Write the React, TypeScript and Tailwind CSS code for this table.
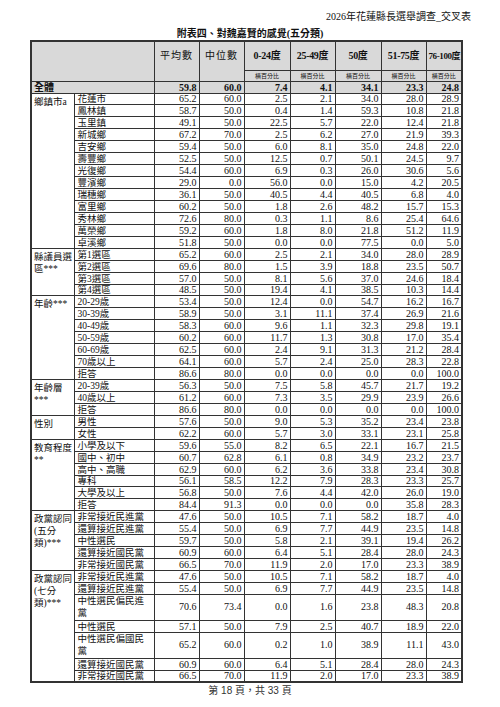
import React from "react";

type Row = { label: string; v: string[]; tall?: boolean };
type Group = { name: React.ReactNode; rows: Row[] };

const r = (s: string, tall = false): Row => {
  const p = s.split(" ");
  return { label: p[0], v: p.slice(1), tall };
};

const GROUPS: Group[] = [
  {
    name: "鄉鎮市a",
    rows: [
      r("花蓮市 65.2 60.0 2.5 2.1 34.0 28.0 28.9"),
      r("鳳林鎮 58.7 50.0 0.4 1.4 59.3 10.8 21.8"),
      r("玉里鎮 49.1 50.0 22.5 5.7 22.0 12.4 21.8"),
      r("新城鄉 67.2 70.0 2.5 6.2 27.0 21.9 39.3"),
      r("吉安鄉 59.4 50.0 6.0 8.1 35.0 24.8 22.0"),
      r("壽豐鄉 52.5 50.0 12.5 0.7 50.1 24.5 9.7"),
      r("光復鄉 54.4 60.0 6.9 0.3 26.0 30.6 5.6"),
      r("豐濱鄉 29.0 0.0 56.0 0.0 15.0 4.2 20.5"),
      r("瑞穗鄉 36.1 50.0 40.5 4.4 40.5 6.8 4.0"),
      r("富里鄉 60.2 50.0 1.8 2.6 48.2 15.7 15.3"),
      r("秀林鄉 72.6 80.0 0.3 1.1 8.6 25.4 64.6"),
      r("萬榮鄉 59.2 60.0 1.8 8.0 21.8 51.2 11.9"),
      r("卓溪鄉 51.8 50.0 0.0 0.0 77.5 0.0 5.0"),
    ],
  },
  {
    name: (
      <>
        縣議員選
        <br />
        區***
      </>
    ),
    rows: [
      r("第1選區 65.2 60.0 2.5 2.1 34.0 28.0 28.9"),
      r("第2選區 69.6 80.0 1.5 3.9 18.8 23.5 50.7"),
      r("第3選區 57.0 50.0 8.1 5.6 37.0 24.6 18.4"),
      r("第4選區 48.5 50.0 19.4 4.1 38.5 10.3 14.4"),
    ],
  },
  {
    name: "年齡***",
    rows: [
      r("20-29歲 53.4 50.0 12.4 0.0 54.7 16.2 16.7"),
      r("30-39歲 58.9 50.0 3.1 11.1 37.4 26.9 21.6"),
      r("40-49歲 58.3 60.0 9.6 1.1 32.3 29.8 19.1"),
      r("50-59歲 60.2 60.0 11.7 1.3 30.8 17.0 35.4"),
      r("60-69歲 62.5 60.0 2.4 9.1 31.3 21.2 28.4"),
      r("70歲以上 64.1 60.0 5.7 2.4 25.0 28.3 22.8"),
      r("拒答 86.6 80.0 0.0 0.0 0.0 0.0 100.0"),
    ],
  },
  {
    name: (
      <>
        年齡層
        <br />
        ***
      </>
    ),
    rows: [
      r("20-39歲 56.3 50.0 7.5 5.8 45.7 21.7 19.2"),
      r("40歲以上 61.2 60.0 7.3 3.5 29.9 23.9 26.6"),
      r("拒答 86.6 80.0 0.0 0.0 0.0 0.0 100.0"),
    ],
  },
  {
    name: "性別",
    rows: [
      r("男性 57.6 50.0 9.0 5.3 35.2 23.4 23.8"),
      r("女性 62.2 60.0 5.7 3.0 33.1 23.1 25.8"),
    ],
  },
  {
    name: (
      <>
        教育程度
        <br />
        **
      </>
    ),
    rows: [
      r("小學及以下 59.6 55.0 8.2 6.5 22.1 16.7 21.5"),
      r("國中、初中 60.7 62.8 6.1 0.8 34.9 23.2 23.7"),
      r("高中、高職 62.9 60.0 6.2 3.6 33.8 23.4 30.8"),
      r("專科 56.1 58.5 12.2 7.9 28.3 23.3 25.7"),
      r("大學及以上 56.8 50.0 7.6 4.4 42.0 26.0 19.0"),
      r("拒答 84.4 91.3 0.0 0.0 0.0 35.8 28.3"),
    ],
  },
  {
    name: (
      <>
        政黨認同
        <br />
        (五分
        <br />
        類)***
      </>
    ),
    rows: [
      r("非常接近民進黨 47.6 50.0 10.5 7.1 58.2 18.7 4.0"),
      r("還算接近民進黨 55.4 50.0 6.9 7.7 44.9 23.5 14.8"),
      r("中性選民 59.7 50.0 5.8 2.1 39.1 19.4 26.2"),
      r("還算接近國民黨 60.9 60.0 6.4 5.1 28.4 28.0 24.3"),
      r("非常接近國民黨 66.5 70.0 11.9 2.0 17.0 23.3 38.9"),
    ],
  },
  {
    name: (
      <>
        政黨認同
        <br />
        (七分
        <br />
        類)***
      </>
    ),
    rows: [
      r("非常接近民進黨 47.6 50.0 10.5 7.1 58.2 18.7 4.0"),
      r("還算接近民進黨 55.4 50.0 6.9 7.7 44.9 23.5 14.8"),
      r("中性選民偏民進黨 70.6 73.4 0.0 1.6 23.8 48.3 20.8", true),
      r("中性選民 57.1 50.0 7.9 2.5 40.7 18.9 22.0"),
      r("中性選民偏國民黨 65.2 60.0 0.2 1.0 38.9 11.1 43.0", true),
      r("還算接近國民黨 60.9 60.0 6.4 5.1 28.4 28.0 24.3"),
      r("非常接近國民黨 66.5 70.0 11.9 2.0 17.0 23.3 38.9"),
    ],
  },
];

const DEGREES = ["0-24度", "25-49度", "50度", "51-75度", "76-100度"];
const TOTAL = ["59.8", "60.0", "7.4", "4.1", "34.1", "23.3", "24.8"];

const cell = "border border-[#333] p-0 px-[2px] overflow-hidden";

export default function App() {
  return (
    <div className="min-h-[707px] w-[500px] bg-white text-[#111] [font-family:'Liberation_Serif','Noto_Sans_CJK_TC',serif]">
      <div className="pr-[29px] pt-[11px] text-right text-[10px] leading-[12px]">2026年花蓮縣長選舉調查_交叉表</div>
      <div className="mt-[5px] text-center text-[10px] font-bold leading-[12px]">附表四、對魏嘉賢的感覺(五分類)</div>

      <table className="mx-[30px] mt-0 w-[431px] table-fixed border-collapse border-2 border-[#333] text-[10px] leading-[10px]">
        <colgroup>
          <col className="w-[43px]" />
          <col className="w-[80px]" />
          <col className="w-[45px]" />
          <col className="w-[45px]" />
          <col className="w-[46px]" />
          <col className="w-[45px]" />
          <col className="w-[46px]" />
          <col className="w-[45px]" />
          <col className="w-[36px]" />
        </colgroup>
        <thead>
          <tr className="h-[29px] bg-[#d9d9d9]">
            <th colSpan={2} rowSpan={2} className={cell} />
            <th rowSpan={2} className={`${cell} pb-[10px] text-center font-normal tracking-[1px]`}>平均數</th>
            <th rowSpan={2} className={`${cell} pb-[10px] text-center font-normal tracking-[1px]`}>中位數</th>
            {DEGREES.map((d, i) => (
              <th
                key={d}
                className={`${cell} px-0 text-center font-bold whitespace-nowrap ${
                  i === 4 ? "text-[9px] tracking-[-0.4px]" : "tracking-[-0.3px]"
                }`}
              >
                {d}
              </th>
            ))}
          </tr>
          <tr className="h-[11px] bg-[#d9d9d9]">
            {DEGREES.map((d) => (
              <td key={d} className={`${cell} px-0 text-center text-[6px] leading-[8px]`}>
                橫百分比
              </td>
            ))}
          </tr>
        </thead>
        <tbody>
          <tr className="h-[12px] bg-[#d9d9d9] font-bold">
            <td colSpan={2} className={`${cell} align-bottom`}>全體</td>
            {TOTAL.map((v, i) => (
              <td key={i} className={`${cell} text-right align-bottom`}>
                {v}
              </td>
            ))}
          </tr>
          {GROUPS.map((g, gi) =>
            g.rows.map((row, ri) => (
              <tr key={`${gi}-${ri}`} className={row.tall ? "h-[26px]" : "h-[11.95px]"}>
                {ri === 0 && (
                  <td rowSpan={g.rows.length} className={`${cell} pt-[2px] align-top text-[9.5px] leading-[12px] whitespace-nowrap`}>
                    {g.name}
                  </td>
                )}
                <td
                  className={`${cell} pl-[3px] text-[9.5px] ${
                    row.tall ? "align-middle leading-[12px]" : "align-bottom whitespace-nowrap"
                  }`}
                >
                  {row.label}
                </td>
                {row.v.map((v, i) => (
                  <td key={i} className={`${cell} text-right ${row.tall ? "align-middle" : "align-bottom"}`}>
                    {v}
                  </td>
                ))}
              </tr>
            ))
          )}
        </tbody>
      </table>

      <div className="mt-[2px] text-center text-[10px] leading-[12px] text-[#333] [font-family:'Liberation_Sans','Noto_Sans_CJK_TC',sans-serif]">
        第 18 頁，共 33 頁
      </div>
    </div>
  );
}
